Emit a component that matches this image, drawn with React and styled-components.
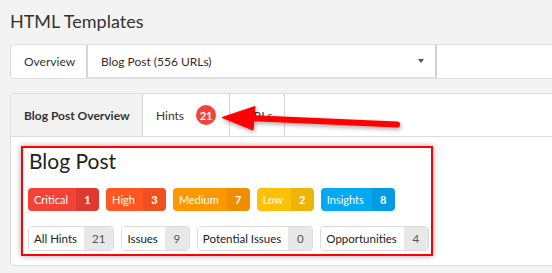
import React from "react";
import styled, { createGlobalStyle } from "styled-components";

const Global = createGlobalStyle`
  html, body {
    margin: 0;
    padding: 0;
    background: #f3f3f3;
    font-family: Lato, "Open Sans", sans-serif;
    color: #333;
  }
  body {
    overflow: hidden;
  }
`;

const Page = styled.div`
  position: relative;
  width: 552px;
  height: 273px;
  overflow: hidden;
  padding: 0 0 0 10px;
  box-sizing: border-box;
`;

const Title = styled.h1`
  margin: 0;
  padding-top: 9px;
  font-size: 18px;
  font-weight: 400;
  line-height: 24px;
  color: #333;
`;

const TopBar = styled.div`
  display: flex;
  height: 35px;
  margin-top: 11px;
  margin-right: -10px;
  font-size: 12px;
`;

const ViewButton = styled.div`
  display: flex;
  align-items: center;
  width: 78px;
  box-sizing: border-box;
  padding-left: 13px;
  background: #fff;
  border: 1px solid #e0e0e0;
  border-right: 2px solid #d6d6d6;
  border-radius: 4px 0 0 4px;
  color: #333;
`;

const Select = styled.div`
  display: flex;
  align-items: center;
  justify-content: space-between;
  width: 349px;
  box-sizing: border-box;
  padding: 0 10px 0 13px;
  background: #fff;
  border-top: 1px solid #e0e0e0;
  border-bottom: 2px solid #e0e0e0;
  border-right: 2px solid #d0d0d0;
  color: #3a2a2a;
`;

const Caret = styled.span`
  width: 0;
  height: 0;
  border-left: 3px solid transparent;
  border-right: 3px solid transparent;
  border-top: 4px solid #555;
  margin-right: 1px;
`;

const Filler = styled.div`
  flex: 1;
  background: #fff;
  border-top: 1px solid #e0e0e0;
  border-bottom: 1px solid #e0e0e0;
`;

const Panel = styled.div`
  margin-top: 14px;
  margin-right: -10px;
  background: #fff;
  border: 1px solid #ddd;
  border-radius: 4px;
`;

const TabBar = styled.div`
  display: flex;
  height: 42px;
  border-bottom: 1px solid #ddd;
`;

const Tab = styled.div`
  display: flex;
  align-items: center;
  gap: 12px;
  width: ${(p) => p.$w}px;
  box-sizing: border-box;
  padding-left: ${(p) => p.$padLeft}px;
  background: ${(p) => (p.$active ? "#f2f2f2" : "#fff")};
  border-right: 1px solid #d6d6d6;
  border-radius: ${(p) => (p.$active ? "4px 0 0 0" : "0")};
  font-size: 12px;
  font-weight: ${(p) => (p.$active ? 700 : 400)};
  color: #333;
`;

const Count = styled.span`
  display: inline-flex;
  align-items: center;
  justify-content: center;
  width: 20px;
  height: 20px;
  border-radius: 50%;
  background: #f4433a;
  color: #fff;
  font-size: 11px;
  font-weight: 700;
`;

const Content = styled.div`
  padding: 9px 0 7px 10px;
  height: 112px;
`;

const Highlight = styled.div`
  width: 412px;
  box-sizing: border-box;
  border: 2px solid #f00;
  box-shadow: 0 0 6px rgba(0, 0, 0, 0.35);
  padding: 0 0 3px 5px;
`;

const Heading = styled.h2`
  margin: 0;
  padding-left: 1px;
  font-size: 21px;
  font-weight: 400;
  line-height: 26px;
  color: #222;
`;

const BadgeRow = styled.div`
  display: flex;
  gap: ${(p) => p.$gap}px;
  margin-top: ${(p) => p.$top}px;
  white-space: nowrap;
`;

const Badge = styled.div`
  display: flex;
  height: 23px;
  border-radius: 4px;
  overflow: hidden;
  font-size: 11px;
  color: #fff;
`;

const BadgeLabel = styled.span`
  display: flex;
  align-items: center;
  padding: 0 8px 0 6px;
  background: ${(p) => p.$bg};
`;

const BadgeNum = styled.span`
  display: flex;
  align-items: center;
  justify-content: center;
  min-width: 23px;
  background: ${(p) => p.$bg};
  font-weight: 700;
`;

const Pill = styled.div`
  display: flex;
  height: 25px;
  box-sizing: border-box;
  border: 1px solid #dcdcdc;
  border-radius: 4px;
  overflow: hidden;
  font-size: 11.5px;
`;

const PillLabel = styled.span`
  display: flex;
  align-items: center;
  padding: 0 7px 0 5px;
  background: #fff;
  color: #222;
`;

const PillNum = styled.span`
  display: flex;
  align-items: center;
  justify-content: center;
  min-width: 24px;
  padding: 0 8px;
  box-sizing: border-box;
  background: #e8e8e8;
  color: #555;
`;

const Arrow = styled.svg`
  position: absolute;
  left: 0;
  top: 0;
  pointer-events: none;
`;

const severities = [
  { label: "Critical", n: 1, bg: "#f44336", dark: "#e03a30" },
  { label: "High", n: 3, bg: "#ff5722", dark: "#ee5020" },
  { label: "Medium", n: 7, bg: "#ff9800", dark: "#ef8e00" },
  { label: "Low", n: 2, bg: "#ffc107", dark: "#eeb40a" },
  { label: "Insights", n: 8, bg: "#03a9f4", dark: "#039ce4" },
];

const types = [
  { label: "All Hints", n: 21 },
  { label: "Issues", n: 9 },
  { label: "Potential Issues", n: 0 },
  { label: "Opportunities", n: 4 },
];

export default function App() {
  return (
    <Page>
      <Global />
      <Title>HTML Templates</Title>
      <TopBar>
        <ViewButton>Overview</ViewButton>
        <Select>
          Blog Post (556 URLs)
          <Caret />
        </Select>
        <Filler />
      </TopBar>
      <Panel>
        <TabBar>
          <Tab $active $w={132} $padLeft={13}>
            Blog Post Overview
          </Tab>
          <Tab $w={87} $padLeft={13}>
            Hints <Count>21</Count>
          </Tab>
          <Tab $w={55} $padLeft={15}>
            URLs
          </Tab>
        </TabBar>
        <Content>
          <Highlight>
            <Heading>Blog Post</Heading>
            <BadgeRow $gap={7} $top={14}>
              {severities.map((s) => (
                <Badge key={s.label}>
                  <BadgeLabel $bg={s.bg}>{s.label}</BadgeLabel>
                  <BadgeNum $bg={s.dark}>{s.n}</BadgeNum>
                </Badge>
              ))}
            </BadgeRow>
            <BadgeRow $gap={7} $top={15}>
              {types.map((t) => (
                <Pill key={t.label}>
                  <PillLabel>{t.label}</PillLabel>
                  <PillNum>{t.n}</PillNum>
                </Pill>
              ))}
            </BadgeRow>
          </Highlight>
        </Content>
      </Panel>
      <Arrow width="552" height="273" viewBox="0 0 552 273">
        <defs>
          <filter id="sh" x="-20%" y="-50%" width="140%" height="200%">
            <feDropShadow dx="1" dy="2" stdDeviation="2" floodColor="#000" floodOpacity="0.35" />
          </filter>
        </defs>
        <g filter="url(#sh)" fill="#f00" stroke="#f00">
          <line x1="397" y1="124.5" x2="248" y2="118" strokeWidth="6" strokeLinecap="round" />
          <polygon points="222,117.5 255,106.5 253,130" strokeWidth="1" strokeLinejoin="round" />
        </g>
      </Arrow>
    </Page>
  );
}
